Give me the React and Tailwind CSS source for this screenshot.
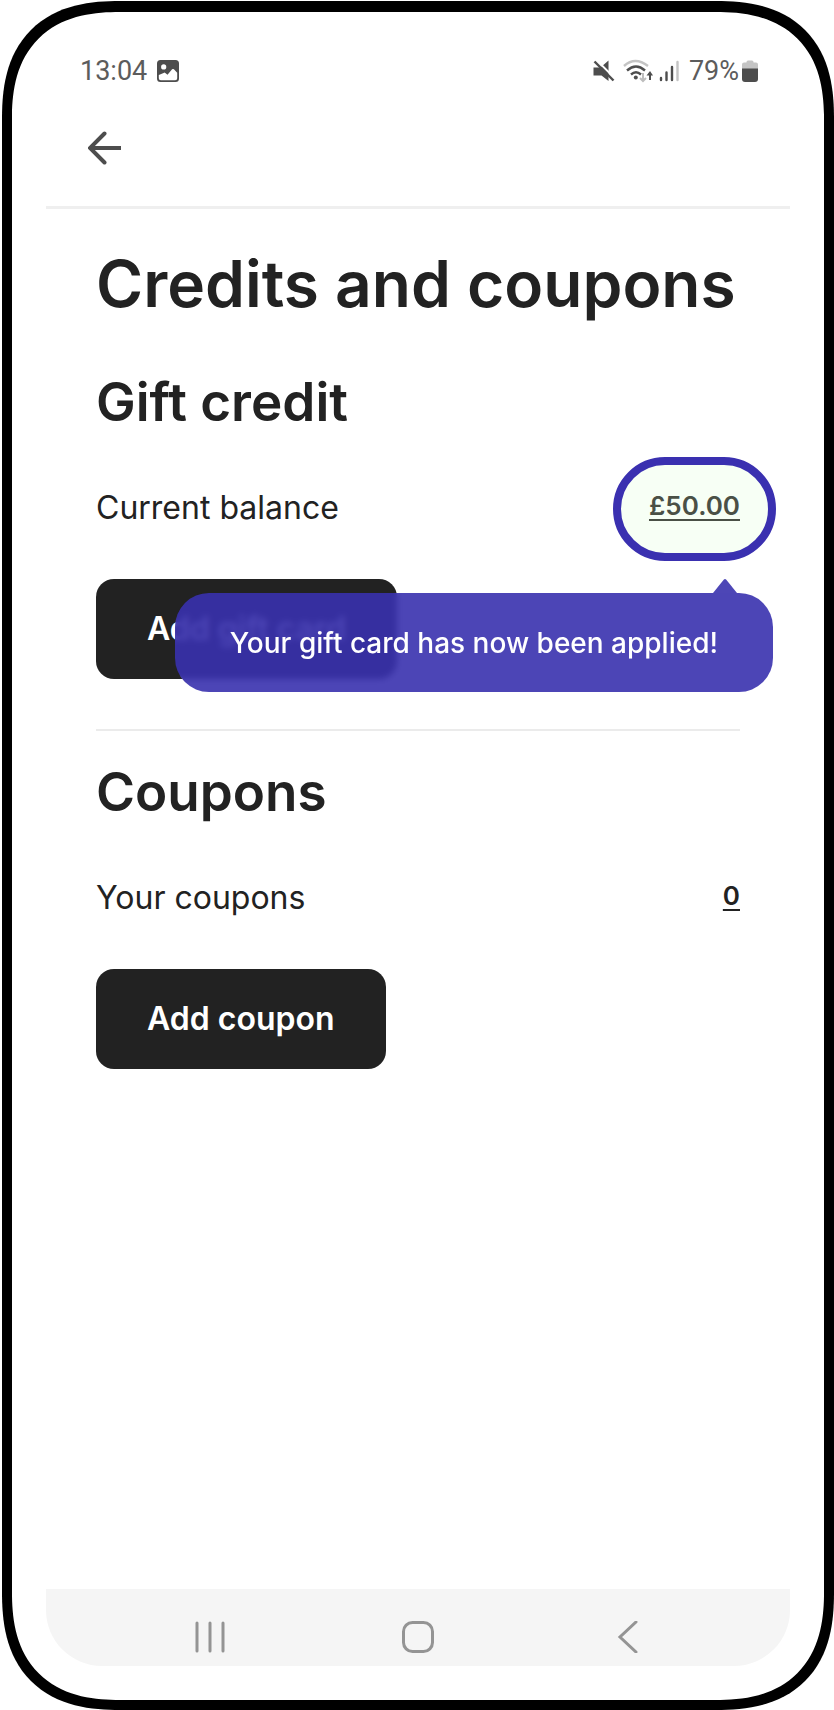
import React from 'react';

const ImageIcon = () => (
  <svg className="h-[22px] w-[22px]" viewBox="0 0 22 22" aria-hidden="true">
    <path
      fill="#4d4d4d"
      fillRule="evenodd"
      d="M3.500 0h15A3.500 3.500 0 0 1 22 3.500v15a3.500 3.500 0 0 1-3.500 3.500h-15A3.500 3.500 0 0 1 0 18.500v-15A3.500 3.500 0 0 1 3.500 0Zm3.200 4.300a2.600 2.600 0 1 0 0 5.200 2.600 2.600 0 0 0 0-5.200ZM1.800 15v3.200a2 2 0 0 0 2 2h14.400a2 2 0 0 0 2-2v-5.400l-3.300-3.500q-.9-.8-1.800 0l-4.600 5.400-2.200-1.800q-.9-.6-1.700 0Z"
    />
  </svg>
);

const MutedIcon = () => (
  <svg className="h-[22px] w-[22px]" viewBox="0 0 22 22" aria-hidden="true">
    <path fill="#4d4d4d" d="M.5 7.500h7l8-7V21l-7-5.500h-8Z" />
    <path stroke="#fff" strokeWidth="2" d="M4 .500l18 18" />
    <path stroke="#4d4d4d" strokeWidth="2.400" d="M1.500 1.500l19 19" />
  </svg>
);

const WifiIcon = () => (
  <svg className="h-6 w-[30px]" viewBox="0 0 30 24" fill="none" aria-hidden="true">
    <g strokeWidth="2.400">
      <path stroke="#c4c4c4" d="M1 7q11-10 24 0" />
      <path stroke="#4d4d4d" d="M4 11.500q9-8 18 0" />
      <path stroke="#4d4d4d" d="M8 15.500q5-4.500 10 0" />
    </g>
    <circle cx="12.800" cy="18.500" r="2" fill="#4d4d4d" />
    <path stroke="#bdbdbd" strokeWidth="2" d="M20 14v8M17 19l3 3 3-3" />
    <path stroke="#4d4d4d" strokeWidth="2" d="M27 21v-7" />
    <path fill="#4d4d4d" d="M23.500 16.500 27 12l3 4.500Z" />
  </svg>
);

const SignalIcon = () => (
  <svg className="h-[22px] w-5" viewBox="0 0 20 22" strokeWidth="2.400" strokeLinecap="round" aria-hidden="true">
    <path stroke="#4d4d4d" d="M2 18v2M7.500 12.500V20M13 7v13" />
    <path stroke="#c4c4c4" d="M18.500 2v18" />
  </svg>
);

const BatteryIcon = () => (
  <svg className="h-[22px] w-4" viewBox="0 0 16 22" aria-hidden="true">
    <path fill="#c4c4c4" d="M0 9V4.500a2 2 0 0 1 2-2h2.500V2a1.500 1.500 0 0 1 1.500-1.500h4A1.500 1.500 0 0 1 11.500 2v.5H14a2 2 0 0 1 2 2V9Z" />
    <path fill="#4d4d4d" d="M0 8.500h16V19a3 3 0 0 1-3 3H3a3 3 0 0 1-3-3Z" />
  </svg>
);

const StatusBar = () => (
  <div className="flex h-[118px] items-center justify-between pl-[34px] pr-8 font-['Roboto',sans-serif] text-[27px] leading-8 text-[#5c5c5c]">
    <div className="flex items-center gap-2.5">
      <span>13:04</span>
      <ImageIcon />
    </div>
    <div className="flex items-center">
      <MutedIcon />
      <span className="ml-2">
        <WifiIcon />
      </span>
      <span className="ml-1.5">
        <SignalIcon />
      </span>
      <span className="ml-2.5 mr-[3px]">79%</span>
      <BatteryIcon />
    </div>
  </div>
);

const Amount = ({ children, highlighted }) => (
  <span className="relative">
    {highlighted && (
      <span className="absolute -left-9 -right-9 -top-[27px] h-[104px] rounded-full border-8 border-[#3a30b0] bg-[#f7fff5]" />
    )}
    <a
      href="#"
      className={`relative text-[26px] font-semibold leading-[44px] underline decoration-2 underline-offset-4 ${
        highlighted ? 'text-[#4a5046]' : 'text-[#222222]'
      }`}
    >
      {children}
    </a>
  </span>
);

const Tooltip = ({ children }) => (
  <div
    role="status"
    className="absolute -right-[33px] top-[109px] flex h-[99px] items-center whitespace-nowrap rounded-[34px] bg-[#3931ae]/90 px-[55px] text-[28px] font-medium leading-10 text-white backdrop-blur-[3px]"
  >
    <svg className="absolute -top-[14px] right-9 h-[14px] w-6" viewBox="0 0 24 14" aria-hidden="true">
      <path fill="#4d46b6" d="M0 14 10.700.800q1.300-1.600 2.600 0L24 14Z" />
    </svg>
    {children}
  </div>
);

const Section = ({ title, label, amount, action, tooltip }) => (
  <section>
    <h2 className="text-[53px] font-semibold leading-[64px]">{title}</h2>
    <div className="relative mt-[50px] flex h-12 items-start justify-between">
      <span className="text-[32px] leading-[48px]">{label}</span>
      <Amount highlighted={Boolean(tooltip)}>{amount}</Amount>
      {tooltip && <Tooltip>{tooltip}</Tooltip>}
    </div>
    <button
      type="button"
      className="mt-[47px] h-[100px] rounded-[18px] bg-[#222222] px-[51px] text-[32px] font-semibold leading-10 text-white"
    >
      {action}
    </button>
  </section>
);

const NavBar = () => (
  <nav className="flex h-[77px] justify-around rounded-b-[56px] bg-[#f5f5f5] px-[60px] pt-4">
    <button type="button" aria-label="Recent apps" className="h-16 w-16">
      <svg className="mx-auto h-8 w-8" viewBox="0 0 32 32" stroke="#949494" strokeWidth="3" strokeLinecap="round">
        <path d="M3 2v28M16 2v28M29 2v28" />
      </svg>
    </button>
    <button type="button" aria-label="Home" className="h-16 w-16">
      <svg className="mx-auto h-8 w-8" viewBox="0 0 32 32" fill="none" stroke="#949494" strokeWidth="3">
        <rect x="1.500" y="1.500" width="29" height="29" rx="9" />
      </svg>
    </button>
    <button type="button" aria-label="Back" className="h-16 w-16">
      <svg className="mx-auto h-8 w-8" viewBox="0 0 32 32" fill="none" stroke="#949494" strokeWidth="3" strokeLinecap="round">
        <path d="M26 1 10 16l16 15" />
      </svg>
    </button>
  </nav>
);

export default function App() {
  return (
    <div className="flex min-h-screen flex-col bg-white pl-[2px] pt-px font-['Inter',sans-serif] text-[#222222]">
      <div className="flex flex-1 flex-col rounded-[98px] border-[10px] border-t-[11px] border-black px-[34px] pb-[34px] [corner-shape:superellipse(1.3)] supports-[corner-shape:round]:rounded-[118px]">
        <StatusBar />
        <header className="flex h-[79px] border-b-[3px] border-[#efefef] pl-[42px]">
          <button type="button" aria-label="Go back" className="h-9 w-9">
            <svg className="h-9 w-9" viewBox="0 0 36 36" fill="none" stroke="#4d4d4d" strokeWidth="4" strokeLinecap="round">
              <path d="M16.500 3.500 2 18l14.500 14.500" />
              <path strokeLinecap="butt" d="M2 18h31" />
            </svg>
          </button>
        </header>
        <main className="flex-1 px-[50px] pt-[35px]">
          <h1 className="whitespace-nowrap text-[64px] font-semibold leading-[80px]">Credits and coupons</h1>
          <div className="mt-[46px]">
            <Section
              title="Gift credit"
              label="Current balance"
              amount="£50.00"
              action="Add gift card"
              tooltip="Your gift card has now been applied!"
            />
          </div>
          <hr className="mb-[29px] mt-[50px] border-t-2 border-[#ebebeb]" />
          <Section title="Coupons" label="Your coupons" amount="0" action="Add coupon" />
        </main>
        <NavBar />
      </div>
    </div>
  );
}
